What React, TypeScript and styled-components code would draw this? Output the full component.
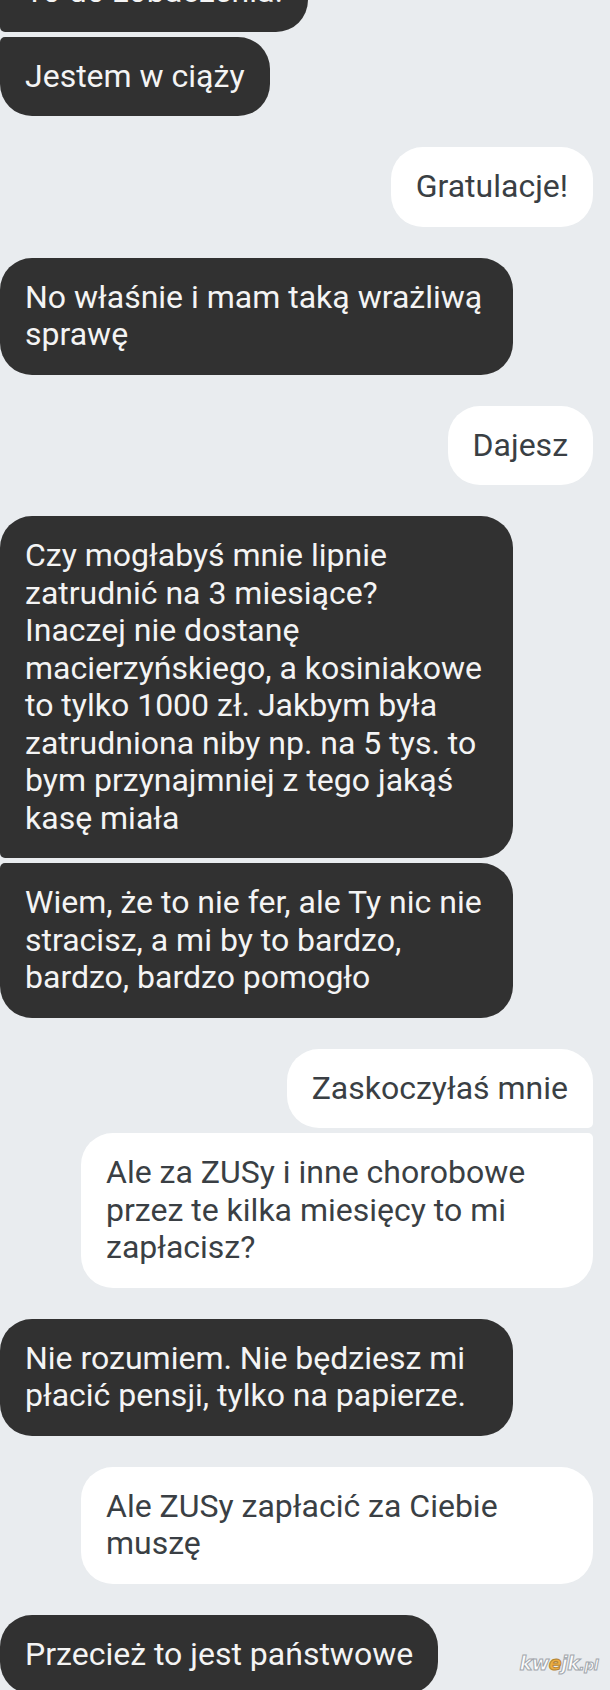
import React from "react";
import styled, { createGlobalStyle, css } from "styled-components";

const GlobalStyle = createGlobalStyle`
  html, body {
    margin: 0;
    padding: 0;
    background: #e9ecef;
    overflow: hidden;
  }
  body {
    font-family: Roboto, "Noto Sans", "Liberation Sans", sans-serif;
  }
`;

type Side = "in" | "out";
type Pos = "single" | "first" | "last";

const Page = styled.div`
  position: relative;
  width: 610px;
  height: 1690px;
  overflow: hidden;
  background: #e9ecef;
`;

const Thread = styled.div`
  display: flex;
  flex-direction: column;
  gap: 31px;
  margin-top: -48px;
  padding: 0 17px 0 0;
`;

const Group = styled.div<{ $side: Side }>`
  display: flex;
  flex-direction: column;
  gap: 5px;
  align-items: ${(p) => (p.$side === "out" ? "flex-end" : "flex-start")};
`;

const BIG = 32;
const SMALL = 5;

const Bubble = styled.div<{ $side: Side; $pos: Pos; $wide?: boolean }>`
  box-sizing: border-box;
  padding: 21px 25px 21px 25px;
  font-size: 32px;
  line-height: 37.5px;
  letter-spacing: 0;
  white-space: pre;
  ${(p) => (p.$wide ? css`width: ${p.$side === "in" ? 513 : 512}px;` : "")}
  ${(p) =>
    p.$side === "in"
      ? css`
          background: #313131;
          color: #f4f4f4;
        `
      : css`
          background: #ffffff;
          color: #3a3f44;
        `}
  ${(p) => {
    const topEdge = p.$pos === "last" ? SMALL : BIG;
    const bottomEdge = p.$pos === "first" ? SMALL : BIG;
    return p.$side === "in"
      ? css`
          border-radius: ${topEdge}px ${BIG}px ${BIG}px ${bottomEdge}px;
        `
      : css`
          border-radius: ${BIG}px ${topEdge}px ${bottomEdge}px ${BIG}px;
        `;
  }}
`;

const Watermark = styled.div`
  position: absolute;
  right: 12px;
  top: 1652px;
  font-family: "DejaVu Sans", sans-serif;
  font-weight: bold;
  font-style: italic;
  font-size: 19px;
  letter-spacing: -0.5px;
  color: #ffffff;
  -webkit-text-stroke: 1px #9aa0a6;
  opacity: 0.9;
`;

const WatermarkE = styled.span`
  color: #f0a830;
  -webkit-text-stroke: 1px #b07a20;
`;

const WatermarkTld = styled.span`
  font-size: 14px;
`;

type Msg = { text: string; wide?: boolean };
type GroupData = { side: Side; msgs: Msg[] };

const groups: GroupData[] = [
  {
    side: "in",
    msgs: [{ text: "To do zobaczenia!" }, { text: "Jestem w ciąży" }],
  },
  { side: "out", msgs: [{ text: "Gratulacje!" }] },
  {
    side: "in",
    msgs: [{ text: "No właśnie i mam taką wrażliwą\nsprawę", wide: true }],
  },
  { side: "out", msgs: [{ text: "Dajesz" }] },
  {
    side: "in",
    msgs: [
      {
        text:
          "Czy mogłabyś mnie lipnie\nzatrudnić na 3 miesiące?\nInaczej nie dostanę\nmacierzyńskiego, a kosiniakowe\nto tylko 1000 zł. Jakbym była\nzatrudniona niby np. na 5 tys. to\nbym przynajmniej z tego jakąś\nkasę miała",
        wide: true,
      },
      {
        text:
          "Wiem, że to nie fer, ale Ty nic nie\nstracisz, a mi by to bardzo,\nbardzo, bardzo pomogło",
        wide: true,
      },
    ],
  },
  {
    side: "out",
    msgs: [
      { text: "Zaskoczyłaś mnie" },
      {
        text: "Ale za ZUSy i inne chorobowe\nprzez te kilka miesięcy to mi\nzapłacisz?",
        wide: true,
      },
    ],
  },
  {
    side: "in",
    msgs: [
      {
        text: "Nie rozumiem. Nie będziesz mi\npłacić pensji, tylko na papierze.",
        wide: true,
      },
    ],
  },
  {
    side: "out",
    msgs: [{ text: "Ale ZUSy zapłacić za Ciebie\nmuszę", wide: true }],
  },
  { side: "in", msgs: [{ text: "Przecież to jest państwowe" }] },
];

function posOf(i: number, n: number): Pos {
  if (n === 1) return "single";
  if (i === 0) return "first";
  return "last";
}

export default function App() {
  return (
    <>
      <GlobalStyle />
      <Page>
        <Thread>
          {groups.map((g, gi) => (
            <Group key={gi} $side={g.side}>
              {g.msgs.map((m, mi) => (
                <Bubble
                  key={mi}
                  $side={g.side}
                  $pos={posOf(mi, g.msgs.length)}
                  $wide={m.wide}
                >
                  {m.text}
                </Bubble>
              ))}
            </Group>
          ))}
        </Thread>
        <Watermark>
          kw<WatermarkE>e</WatermarkE>jk<WatermarkTld>.pl</WatermarkTld>
        </Watermark>
      </Page>
    </>
  );
}
